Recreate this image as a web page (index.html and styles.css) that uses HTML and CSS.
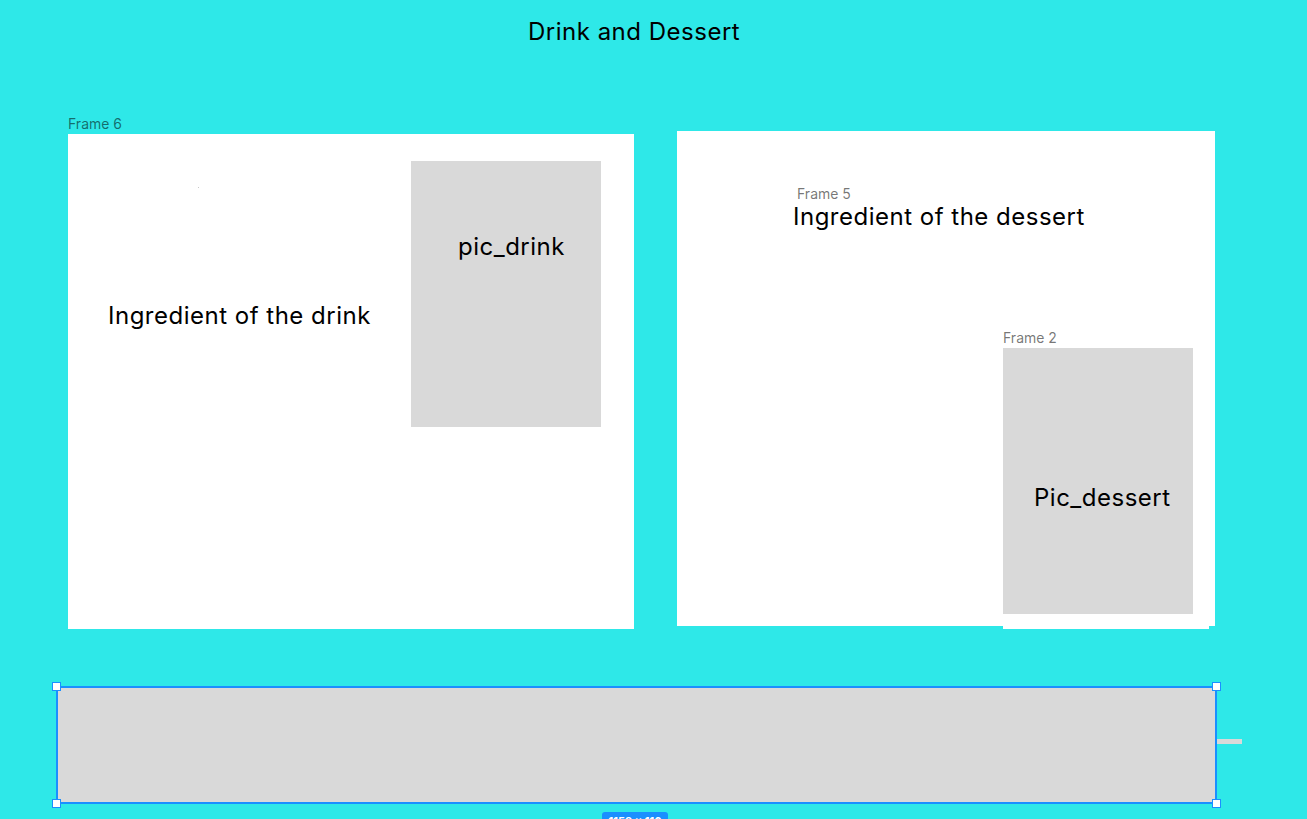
FILE: index.html
```html
<!DOCTYPE html>
<html lang="en">
<head>
<meta charset="utf-8">
<title>Drink and Dessert</title>
<link rel="stylesheet" href="styles.css">
</head>
<body>
<div class="page">
  <header class="header">
    <h1 class="title">Drink and Dessert</h1>
  </header>

  <section class="row">
    <div class="frame-col">
      <div class="frame-label">Frame 6</div>
      <div class="frame frame-drink">
        <span class="dot"></span>
        <div class="ingredient ingredient-drink">Ingredient of the drink</div>
        <div class="pic pic-drink"><span class="pic-text">pic_drink</span></div>
      </div>
    </div>

    <div class="frame frame-dessert">
      <div class="sub-frame">
        <div class="frame-label inner">Frame 5</div>
        <div class="ingredient ingredient-dessert">Ingredient of the dessert</div>
      </div>
      <div class="frame2-wrap">
        <div class="frame-label">Frame 2</div>
        <div class="frame2">
          <div class="pic pic-dessert"><span class="pic-text">Pic_dessert</span></div>
        </div>
      </div>
    </div>
  </section>

  <section class="bottom-row">
    <div class="selected-rect">
      <span class="handle h-tl"></span>
      <span class="handle h-tr"></span>
      <span class="handle h-bl"></span>
      <span class="handle h-br"></span>
      <span class="size-badge">1159 × 116</span>
    </div>
    <div class="side-bar"></div>
  </section>
</div>
</body>
</html>
```

FILE: styles.css
```css
html, body {
  margin: 0;
  padding: 0;
  height: 100%;
  overflow: hidden;
}

body {
  background: #2ee8e8;
  font-family: "Inter", "Liberation Sans", sans-serif;
  color: #000;
}

.page {
  width: 1307px;
  height: 819px;
  overflow: hidden;
}

.header {
  padding-top: 17px;
  padding-left: 528px;
  margin-bottom: 69px;
}

.title {
  margin: 0;
  font-size: 24px;
  font-weight: 400;
  line-height: 29px;
  letter-spacing: 0.5px;
}

.row {
  display: flex;
  align-items: flex-start;
  padding-left: 68px;
  gap: 43px;
  height: 514px;
}

.frame-col {
  display: flex;
  flex-direction: column;
}

.frame-label {
  font-size: 14px;
  line-height: 17px;
  color: rgba(0, 0, 0, 0.55);
  margin-bottom: 2px;
}

.frame {
  background: #fff;
  height: 495px;
  box-sizing: border-box;
}

.frame-drink {
  width: 566px;
  display: flex;
  align-items: flex-start;
  padding-left: 40px;
  padding-right: 33px;
  position: relative;
}

.dot {
  position: absolute;
  left: 130px;
  top: 53px;
  width: 1px;
  height: 1px;
  background: #c8c8c8;
}

.ingredient {
  font-size: 24px;
  line-height: 29px;
  letter-spacing: 0.5px;
  white-space: nowrap;
}

.ingredient-drink {
  margin-top: 167px;
}

.ingredient-dessert {
  margin-left: -4px;
}

.pic {
  background: #d9d9d9;
  width: 190px;
  height: 266px;
  box-sizing: border-box;
}

.pic-text {
  display: block;
  font-size: 24px;
  line-height: 29px;
  letter-spacing: 0.5px;
  white-space: nowrap;
}

.pic-drink {
  margin-left: auto;
  margin-top: 27px;
  padding-left: 47px;
  padding-top: 71px;
}

.frame-dessert {
  width: 538px;
  margin-top: 16px;
  padding-left: 120px;
  padding-top: 54px;
  display: flex;
  flex-direction: column;
  align-items: flex-start;
}

.frame-label.inner {
  margin-bottom: 0;
}

.frame2-wrap {
  margin-left: 206px;
  margin-top: 98px;
}

.frame2 {
  background: #fff;
  width: 206px;
  height: 281px;
}

.pic-dessert {
  padding-left: 31px;
  padding-top: 135px;
}

.bottom-row {
  display: flex;
  align-items: flex-start;
  padding-left: 56px;
  margin-top: 57px;
}

.selected-rect {
  position: relative;
  width: 1161px;
  height: 118px;
  box-sizing: border-box;
  background: #d9d9d9;
  border: 2px solid #1a8fff;
}

.handle {
  position: absolute;
  width: 9px;
  height: 9px;
  box-sizing: border-box;
  background: #fff;
  border: 1.5px solid #1a8fff;
}

.h-tl { left: -6px; top: -6px; }
.h-tr { right: -6px; top: -6px; }
.h-bl { left: -6px; bottom: -6px; }
.h-br { right: -6px; bottom: -6px; }

.size-badge {
  position: absolute;
  left: 544px;
  top: 124px;
  width: 66px;
  height: 18px;
  box-sizing: border-box;
  background: #1a8fff;
  color: #fff;
  border-radius: 3px;
  font-size: 11px;
  font-weight: 700;
  line-height: 18px;
  text-align: center;
}

.side-bar {
  width: 25px;
  height: 5px;
  background: #d9d9d9;
  margin-top: 53px;
}
```
